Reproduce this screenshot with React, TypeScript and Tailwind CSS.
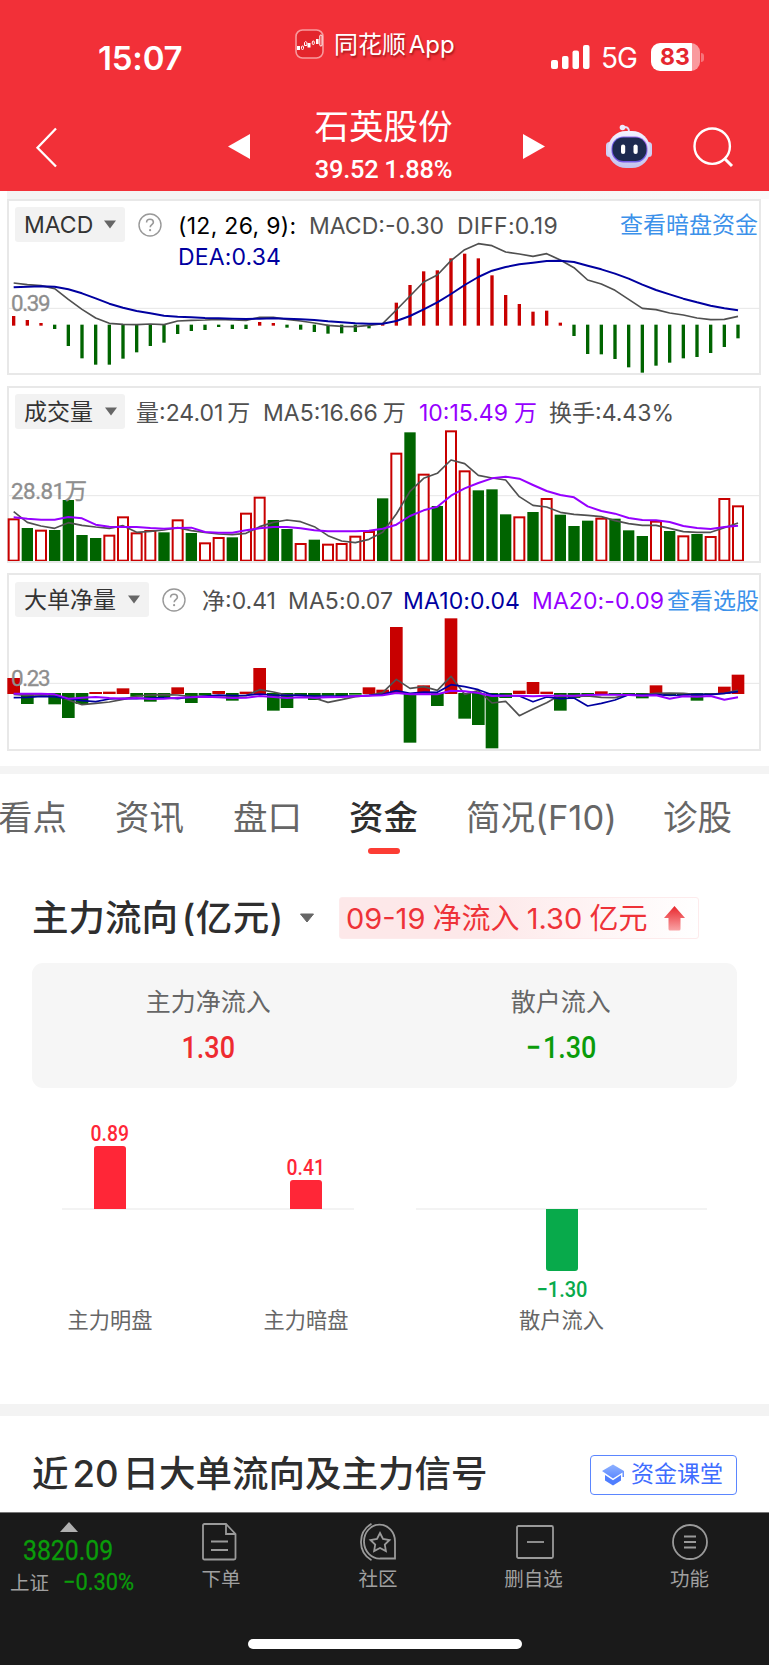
import type { ReactNode } from "react";

const cjk = "font-['Inter','Noto_Sans_CJK_SC',sans-serif]";
const din = "font-['Roboto','Noto_Sans_CJK_SC',sans-serif]";

const STEP = 41;
const FIRST = 41;

const macd: number[] = [
  378, 390, 399, 417, 468, 505, 524, 524, 506, 487, 468, 458, 432, 423, 420, 411, 417, 417, 396, 399, 413, 419, 426,
  431, 430, 426, 415, 401, 338, 285, 244, 241, 205, 191, 205, 256, 315, 342, 365, 362, 398, 438, 492, 493, 507, 532,
  548, 527, 518, 505, 501, 489, 471, 445,
];
const diff: number[] = [
  279, 284, 287, 296, 328, 358, 384, 400, 403, 404, 402, 404, 393, 391, 390, 388, 390, 391, 382, 382, 388, 393, 399,
  406, 409, 410, 406, 401, 360, 318, 276, 255, 212, 179, 161, 167, 186, 192, 199, 191, 210, 233, 270, 282, 301, 328,
  355, 359, 369, 375, 384, 389, 388, 379,
];
const dea: number[] = [
  292, 290, 289, 290, 298, 310, 325, 341, 353, 363, 370, 377, 380, 382, 384, 385, 386, 387, 386, 385, 386, 388, 390,
  394, 397, 400, 401, 401, 393, 378, 358, 337, 312, 285, 261, 242, 231, 223, 218, 213, 212, 216, 227, 238, 251, 266,
  284, 300, 313, 326, 337, 347, 355, 361,
];

const volume: number[] = [
  417, 444, 451, 450, 360, 465, 474, 466, 411, 459, 452, 457, 420, 459, 489, 473, 472, 400, 352, 420, 447, 491, 479,
  493, 491, 469, 455, 355, 220, 157, 283, 378, 153, 273, 331, 328, 403, 411, 396, 356, 404, 438, 422, 415, 416, 451,
  468, 424, 453, 468, 462, 470, 356, 378,
];
const volumeKind = "RGRGGGGRRRRGRGRRGRRGGRGRRRRGRGRGRRGGGRGRGGGRGGGRGRGRRR";
const vma5: number[] = [
  395, 427, 438, 445, 428, 436, 441, 445, 437, 457, 454, 450, 443, 452, 457, 462, 464, 460, 440, 427, 420, 425, 440,
  467, 483, 488, 478, 457, 402, 334, 295, 280, 240, 251, 286, 294, 300, 350, 376, 381, 397, 403, 406, 410, 422, 431,
  436, 436, 445, 455, 457, 457, 443, 429,
];
const vma10: number[] = [
  412, 416, 419, 419, 411, 415, 434, 440, 441, 441, 444, 446, 444, 443, 456, 458, 458, 451, 445, 441, 441, 445, 451,
  454, 454, 454, 452, 446, 434, 408, 391, 380, 347, 325, 309, 295, 290, 296, 315, 333, 345, 352, 379, 393, 401, 414,
  420, 421, 426, 438, 444, 447, 441, 437,
];

const net: number[] = [
  324, 402, 376, 403, 444, 402, 366, 365, 355, 380, 395, 386, 352, 399, 376, 363, 392, 365, 294, 422, 414, 378, 390,
  377, 378, 374, 352, 359, 171, 518, 346, 408, 145, 446, 465, 535, 384, 362, 336, 365, 422, 384, 376, 364, 375, 375,
  385, 346, 376, 376, 392, 375, 350, 314,
];
const nma5: number[] = [
  373, 376, 374, 375, 390, 404, 400, 396, 388, 378, 375, 374, 375, 380, 379, 378, 378, 377, 359, 366, 375, 376, 384,
  397, 389, 380, 376, 368, 328, 355, 350, 361, 319, 373, 362, 399, 394, 437, 417, 398, 375, 380, 378, 382, 383, 374,
  374, 370, 369, 370, 374, 372, 370, 361,
];
const nma10: number[] = [
  383, 382, 379, 380, 386, 392, 395, 387, 385, 386, 384, 383, 386, 381, 378, 375, 377, 376, 372, 375, 376, 376, 378,
  378, 378, 378, 376, 373, 362, 370, 366, 367, 344, 350, 359, 374, 377, 378, 395, 381, 386, 384, 408, 400, 390, 374,
  375, 374, 376, 375, 373, 374, 370, 365,
];
const nma20: number[] = [
  371, 371, 371, 373, 386, 383, 381, 384, 386, 384, 387, 386, 383, 382, 380, 382, 384, 383, 378, 381, 384, 382, 383,
  382, 381, 379, 377, 376, 369, 373, 372, 373, 362, 364, 369, 378, 377, 377, 379, 377, 377, 377, 375, 374, 374, 375,
  377, 376, 386, 379, 380, 378, 389, 382,
];

const xAt = (i: number) => FIRST + STEP * i;

function Line({ data, color, w = 5 }: { data: number[]; color: string; w?: number }) {
  return (
    <polyline
      points={data.map((v, i) => `${xAt(i)},${v}`).join(" ")}
      fill="none"
      stroke={color}
      strokeWidth={w}
      strokeLinejoin="round"
    />
  );
}

/* Chart space is three units per pixel; `top` is the first row shown. */
function Plot({ top, height, gridY, label, labelW, labelY, children }: {
  top: number; height: number; gridY: number; label: string; labelW: number; labelY: number; children: ReactNode;
}) {
  return (
    <svg className="col-start-1 row-start-1 -ml-[9px] h-full w-[769px]" viewBox={`0 ${top} 2307 ${height}`} preserveAspectRatio="none">
      <line x1={27} x2={2280} y1={gridY} y2={gridY} stroke="#e6e6e6" strokeWidth={3} />
      {children}
      <text x={33} y={labelY} fontSize={67} fill="#8e8e8e" stroke="#8e8e8e" strokeWidth={1} textLength={labelW} className={din}>{label}</text>
    </svg>
  );
}

function Panel({ plot, children, size }: { plot: ReactNode; children: ReactNode; size: string }) {
  return (
    <section className={`ml-[7px] grid w-[754px] border-2 border-[#e8e8e8] bg-white ${size}`}>
      {plot}
      <div className="col-start-1 row-start-1">{children}</div>
    </section>
  );
}

function Picker({ label, size, text }: { label: string; size: string; text: string }) {
  return (
    <button className={`flex h-[35px] shrink-0 items-center rounded-[3px] bg-[#f2f2f2] pl-[9px] text-[#333] ${size}`}>
      <span className={`shrink-0 pt-[2px] text-left whitespace-nowrap ${text}`}>{label}</span>
      <svg width="12" height="9" viewBox="0 0 12 9"><path d="M0 .5h12L6 8.5z" fill="#666" /></svg>
    </button>
  );
}

function Help() {
  return (
    <svg className="shrink-0" width="24" height="24" viewBox="0 0 24 24" fill="none" stroke="#999" strokeWidth="1.4">
      <circle cx="12" cy="12" r="11" />
      <path d="M8.6 9.4c0-2 1.5-3.2 3.4-3.2s3.4 1.2 3.4 3c0 2.4-3.2 2.6-3.2 5.1" strokeWidth="1.6" />
      <circle cx="12.1" cy="17.2" r="1.1" fill="#999" stroke="none" />
    </svg>
  );
}

function Header() {
  return (
    <header className="h-[191px] bg-[#f23038] text-white">
      <div className="flex h-[96px] items-start">
        <div className="ml-[98px] mt-[37px] w-[197px] text-[33px] leading-[42px] font-semibold tracking-[-0.2px]">15:07</div>
        <svg className="mt-[29px] shrink-0" width="29" height="30" viewBox="0 0 29 30">
          <rect x="1" y="1" width="27" height="28" rx="6.5" fill="#e3252c" stroke="#f89a9d" strokeWidth="1.6" />
          <g fill="#fff">
            <rect x="2" y="17" width="3" height="4" />
            <rect x="12.5" y="14" width="3" height="4.5" />
            <rect x="21" y="10" width="2.6" height="5" />
          </g>
          <g fill="none" stroke="#fff" strokeWidth="1">
            <rect x="6.5" y="17" width="2" height="3.5" rx="1" />
            <path d="M9.5 16.5v-3l1.2-1 1.2 1v3z" />
            <rect x="17.3" y="12" width="2" height="3.5" rx="1" />
            <rect x="24.8" y="6" width="2.2" height="11" rx="1" />
          </g>
        </svg>
        <div className="ml-[10px] mt-[27px] w-[217px] shrink-0 text-[24px] leading-[36px] whitespace-nowrap [word-spacing:-4px] [text-shadow:1px_2px_2px_rgba(90,0,0,0.5)]">同花顺 App</div>
        <svg className="mt-[45px] shrink-0" width="40" height="24" viewBox="0 0 40 24" fill="#fff">
          <rect x="0" y="15" width="7" height="9" rx="2" />
          <rect x="11" y="11" width="6.5" height="13" rx="2" />
          <rect x="21.5" y="5.500" width="6.500" height="18.500" rx="2" />
          <rect x="32" y="0" width="6.500" height="24" rx="2" />
        </svg>
        <div className="ml-[10px] mt-[40px] w-[50px] shrink-0 text-[28px] leading-[36px] tracking-[-1px]">5G</div>
        <div className="mt-[43px] flex shrink-0 items-center">
          <div className="h-[28px] w-[49px] rounded-[9px] bg-[linear-gradient(90deg,#fff_83%,#f99a9e_83%)] pr-[1px] text-center text-[23px] leading-[29px] font-bold text-[#e5262f]">83</div>
          <div className="ml-[1px] h-[9px] w-[3px] rounded-r-full bg-[#f6747a]" />
        </div>
      </div>
      <div className="flex h-[95px] items-start">
        <svg className="ml-[35px] mt-[31px] shrink-0" width="24" height="42" viewBox="0 0 24 42" fill="none" stroke="#fff" strokeWidth="2.300"><path d="M21 1.500 2.500 20.700 21 39.500" /></svg>
        <svg className="ml-[169px] mt-[38px] shrink-0" width="22" height="25" viewBox="0 0 22 25"><path d="M22 0v25L0 12.500z" fill="#fff" /></svg>
        <div className="ml-[61px] mt-[5px] w-[145px] text-center whitespace-nowrap">
          <div className="text-[34.5px] leading-[52px]">石英股份</div>
          <div className={`origin-center scale-x-[0.96] text-[26.500px] leading-[31px] font-medium tracking-[-0.3px] ${din}`}>39.52 1.88%</div>
        </div>
        <svg className="ml-[67px] mt-[38px] shrink-0" width="22" height="25" viewBox="0 0 22 25"><path d="M0 0v25l22-12.500z" fill="#fff" /></svg>
        <svg className="ml-[60px] mt-[28px] shrink-0" width="48" height="45" viewBox="0 0 48 45">
          <defs>
            <linearGradient id="shell" x1="0" y1="0" x2="0" y2="1"><stop offset="0" stopColor="#f4f2ff" /><stop offset="1" stopColor="#c3c2ee" /></linearGradient>
            <linearGradient id="visor" x1="0" y1="1" x2="1" y2="0"><stop offset="0" stopColor="#7a4fe0" /><stop offset=".5" stopColor="#6d63ea" /><stop offset="1" stopColor="#b46cf0" /></linearGradient>
          </defs>
          <path d="M18 3c4-.5 6 1 6 5" fill="none" stroke="#e3e0fb" strokeWidth="2" />
          <circle cx="17.500" cy="3.500" r="2.800" fill="#eeeafd" />
          <rect x="1" y="18" width="7" height="15" rx="3.500" fill="#cfd0f4" />
          <rect x="40" y="18" width="7" height="15" rx="3.500" fill="#cfd0f4" />
          <rect x="3" y="7" width="42" height="37" rx="18" fill="url(#shell)" />
          <rect x="6.500" y="12.500" width="36" height="26" rx="12" fill="url(#visor)" />
          <rect x="7.500" y="13.500" width="34" height="23.500" rx="11" fill="#1d2a4f" />
          <rect x="16" y="20.500" width="4.200" height="9.500" rx="2.100" fill="#fff" />
          <rect x="28.500" y="20.500" width="4.200" height="9.500" rx="2.100" fill="#fff" />
        </svg>
        <svg className="ml-[40px] mt-[31px] shrink-0" width="41" height="41" viewBox="0 0 41 41" fill="none" stroke="#fff" strokeWidth="2.400"><circle cx="19.200" cy="19.200" r="17.700" /><path d="M31.500 31.500 39 39" strokeWidth="3" /></svg>
      </div>
    </header>
  );
}

function Charts() {
  return (
    <div className="flex h-[575px] flex-col text-[23px] text-[#505050]">
      <div className="ml-[7px] h-[8px] shrink-0 bg-gradient-to-r from-[#f4f4f4] from-60% to-[#fafafa]" />
      <Panel
        size="h-[176px]"
        plot={
          <Plot top={33} height={516} gridY={355} label="0.39" labelW={119} labelY={363}>
            {macd.map((v, i) => (
              <rect key={i} x={xAt(i) - 5} y={Math.min(v, 404)} width={10} height={v < 404 ? 407 - v : v - 404} fill={v < 404 ? "#c80000" : "#006400"} />
            ))}
            <Line data={diff} color="#505050" />
            <Line data={dea} color="#0000a0" w={6} />
          </Plot>
        }
      >
        <div className="mt-[6px] ml-[6px] flex h-[35px] items-center whitespace-nowrap [&>a]:pt-[2px] [&>span]:pt-[3px]">
          <Picker label="MACD" size="w-[110px]" text="w-[80px]" />
          <div className="ml-[13px] w-[40px]"><Help /></div>
          <span className="w-[131px] tracking-[0.3px] text-black">(12, 26, 9):</span>
          <span className="w-[148px]">MACD:-0.30</span>
          <span className="w-[163px] tracking-[0.25px]">DIFF:0.19</span>
          <a className="text-[#3c91ea]">查看暗盘资金</a>
        </div>
        <div className="ml-[169px] leading-[30px] tracking-[0.15px] text-[#0000a0]">DEA:0.34</div>
      </Panel>
      <Panel
        size="mt-[11px] h-[177px]"
        plot={
          <Plot top={24} height={519} gridY={347} label="28.81万" labelW={228} labelY={357}>
            {volume.map((v, i) =>
              volumeKind[i] === "G" ? (
                <rect key={i} x={xAt(i) - 17} y={v} width={34} height={545 - v} fill="#006400" />
              ) : (
                <rect key={i} x={xAt(i) - 15} y={v + 1} width={30} height={541 - v} fill="#fff" stroke="#c80000" strokeWidth={6} />
              ),
            )}
            <Line data={vma5} color="#505050" />
            <Line data={vma10} color="#9600ff" w={6} />
          </Plot>
        }
      >
        <div className="mt-[6px] ml-[6px] flex h-[35px] items-center whitespace-nowrap [&>span]:pt-[3px]">
          <Picker label="成交量" size="w-[110px]" text="w-[81px]" />
          <span className="ml-[11px] w-[127px]">量:24.01<span className="ml-[4px]">万</span></span>
          <span className="w-[156px]">MA5:16.66<span className="ml-[5px]">万</span></span>
          <span className="w-[130px] text-[#9600ff]">10:15.49<span className="ml-[6px]">万</span></span>
          <span>换手:4.43%</span>
        </div>
      </Panel>
      <Panel
        size="mt-[10px] h-[178px]"
        plot={
          <Plot top={15} height={522} gridY={340} label="0.23" labelW={119} labelY={348}>
            {net.map((v, i) => (
              <rect key={i} x={xAt(i) - 19} y={v < 370 ? v : 369} width={38} height={v < 370 ? 372 - v : v - 369} fill={v < 370 ? "#c80000" : "#006400"} />
            ))}
            <Line data={nma5} color="#505050" />
            <Line data={nma10} color="#0000a0" />
            <Line data={nma20} color="#9600ff" w={6} />
          </Plot>
        }
      >
        <div className="mt-[7px] ml-[6px] flex h-[35px] items-center whitespace-nowrap [&>a]:pt-[3px] [&>span]:pt-[3px]">
          <Picker label="大单净量" size="w-[134px]" text="w-[104px]" />
          <div className="ml-[13px] w-[40px]"><Help /></div>
          <span className="w-[86px]">净:0.41</span>
          <span className="w-[115px] tracking-[0.1px]">MA5:0.07</span>
          <span className="w-[129px] tracking-[0.15px] text-[#0000a0]">MA10:0.04</span>
          <span className="w-[135px] tracking-[0.1px] text-[#9600ff]">MA20:-0.09</span>
          <a className="text-[#3c91ea]">查看选股</a>
        </div>
      </Panel>
    </div>
  );
}

function Tabs() {
  return (
    <nav className="flex h-[88px] items-start overflow-hidden pt-[18px] text-[34.5px] leading-[52px] whitespace-nowrap text-[#666]">
      <span className="-ml-[2px] w-[117px] shrink-0">看点</span>
      <span className="w-[118px] shrink-0">资讯</span>
      <span className="w-[116px] shrink-0">盘口</span>
      <div className="flex w-[117px] shrink-0 flex-col font-medium text-[#2e2e2e]">
        <span>资金</span>
        <span className="mt-[4px] ml-[19px] h-[6px] w-[32px] rounded-[3px] bg-[#fc3d34]" />
      </div>
      <span className="w-[197px] shrink-0 tracking-[0.1px]">简况(F10)</span>
      <span>诊股</span>
    </nav>
  );
}

function FlowItem({ value, label, up, bar }: { value: string; label: string; up?: boolean; bar: string }) {
  return (
    <div className="flex w-[100px] flex-col items-center">
      <div className="flex h-[90px] flex-col items-center justify-end">
        {up && <span className={`mb-[-1px] scale-x-[0.88] text-[22px] leading-[27px] font-medium text-[#ff2637] ${din}`}>{value}</span>}
        {up && <span className={`w-[32px] rounded-t-[3px] bg-[#ff2637] ${bar}`} />}
      </div>
      <div className="flex h-[96px] flex-col items-center">
        {!up && <span className={`w-[32px] rounded-b-[3px] bg-[#08aa4b] ${bar}`} />}
        {!up && <span className={`mt-[5px] scale-x-[0.91] text-[22px] leading-[27px] font-medium text-[#08aa4b] ${din}`}>{value}</span>}
      </div>
      <span className="text-[21.200px] leading-[30px] text-[#666]">{label}</span>
    </div>
  );
}

function MoneyFlow() {
  return (
    <section className="h-[542px] pt-[35px]">
      <div className="flex h-[42px] items-center whitespace-nowrap">
        <h2 className="ml-[32px] w-[267px] text-[36.500px] font-medium text-[#2e2e2e] [word-spacing:-6px]">主力流向 <span className="tracking-[0.5px]">(亿元)</span></h2>
        <svg width="16" height="10" viewBox="0 0 16 10"><path d="M1.500 1h13L8 9z" fill="#666" stroke="#666" strokeLinejoin="round" /></svg>
        <div className="ml-[24px] flex h-[42px] w-[360px] items-center rounded-[3px] border border-[#fdebec] bg-gradient-to-r from-[#fde8e9] from-40% to-white pl-[6px] text-[29px] text-[#ee3238]">
          <span className="w-[318px] pt-[1px] [word-spacing:-1px]">09-19 净流入 1.30 亿元</span>
          <svg width="21" height="25" viewBox="0 0 21 25">
            <defs><linearGradient id="rise" x1="0" y1="0" x2="0" y2="1"><stop offset="0" stopColor="#e8262c" /><stop offset="1" stopColor="#f9a3a5" /></linearGradient></defs>
            <path d="M10.500 0 21 12h-4.500v11q0 1.500-1.500 1.500H6q-1.500 0-1.500-1.500V12H0z" fill="url(#rise)" />
          </svg>
        </div>
      </div>
      <div className="mt-[24px] ml-[32px] grid h-[125px] w-[705px] grid-cols-2 rounded-[11px] bg-[#f6f6f6] pt-[20px] text-center">
        <div>
          <div className="text-[25px] leading-[38px] text-[#666]">主力净流入</div>
          <div className={`mt-[7px] scale-x-[0.87] text-[31px] leading-[40px] font-medium text-[#ee2b30] ${din}`}>1.30</div>
        </div>
        <div>
          <div className="text-[25px] leading-[38px] text-[#666]">散户流入</div>
          <div className={`mt-[7px] scale-x-[0.87] text-[31px] leading-[40px] font-medium text-[#0a9c0a] ${din}`}><span className="mr-[2px]">−</span>1.30</div>
        </div>
      </div>
      <div className="mt-[31px] ml-[62px] grid grid-cols-[292px_291px] gap-[62px]">
        <div className="grid">
          <div className="col-start-1 row-start-1 mt-[89px] h-[2px] bg-[#f3f3f3]" />
          <div className="col-start-1 row-start-1 -mr-[2px] -ml-[2px] flex justify-between">
            <FlowItem value="0.89" label="主力明盘" up bar="h-[63px]" />
            <FlowItem value="0.41" label="主力暗盘" up bar="h-[29px]" />
          </div>
        </div>
        <div className="grid">
          <div className="col-start-1 row-start-1 mt-[89px] h-[2px] bg-[#f3f3f3]" />
          <div className="col-start-1 row-start-1 flex justify-center">
            <FlowItem value="−1.30" label="散户流入" bar="h-[62px]" />
          </div>
        </div>
      </div>
    </section>
  );
}

function Signals() {
  return (
    <section className="flex h-[96px] items-center justify-between pt-[21px] pr-[32px] pl-[32px]">
      <h2 className="text-[36.500px] font-medium whitespace-nowrap text-[#2e2e2e]">近<span className="mr-[4px] ml-[4px]">20</span>日大单流向及主力信号</h2>
      <button className="flex h-[40px] w-[147px] items-center rounded-[4px] border-[1.500px] border-[#5b86ff] pl-[11px] text-[23px] whitespace-nowrap text-[#3f6dff]">
        <svg className="mr-[7px] shrink-0" width="22" height="22" viewBox="0 0 22 22">
          <defs><linearGradient id="cap" x1="0" y1="0" x2="0" y2="1"><stop offset="0" stopColor="#8fb2ff" /><stop offset="1" stopColor="#5c88ff" /></linearGradient></defs>
          <path d="M11 .5 22 7v6h-1.500V8.500L11 14.500 0 7z" fill="url(#cap)" />
          <path d="M3 11 11 16.300l8-5.300v5.500L11 21.500l-8-5z" fill="#4f7eff" />
        </svg>
        资金课堂
      </button>
    </section>
  );
}

function NavItem({ label, children, size }: { label: string; children: ReactNode; size: string }) {
  return (
    <div className={`flex shrink-0 flex-col items-center ${size}`}>
      <svg width="42" height="40" viewBox="0 0 42 40" fill="none" stroke="#9a9a9a" strokeWidth="1.800">{children}</svg>
      <span className="mt-[2px] text-[19.500px] leading-[30px] text-[#a0a0a0]">{label}</span>
    </div>
  );
}

function BottomBar() {
  return (
    <footer className="h-[153px] border-t border-[#777] bg-[#1a1a1a]">
      <div className="flex h-[126px] pt-[9px]">
        <div className="flex w-[140px] shrink-0 flex-col items-center">
          <svg className="-ml-[3px]" width="18" height="10" viewBox="0 0 18 10"><path d="M9 0l9 10H0z" fill="#b0b0b0" /></svg>
          <span className={`mt-[3px] -ml-[3px] scale-x-[0.92] text-[27px] leading-[32px] text-[#0a9c0a] [-webkit-text-stroke:0.3px_#0a9c0a] ${din}`}>3820.09</span>
          <div className="flex w-full items-center pl-[10px] whitespace-nowrap">
            <span className="w-[53px] pt-[1px] text-[19.500px] leading-[30px] text-[#a0a0a0]">上证</span>
            <span className={`origin-left scale-x-[0.95] text-[23px] leading-[30px] text-[#0a9c0a] [-webkit-text-stroke:0.3px_#0a9c0a] ${din}`}>−0.30%</span>
          </div>
        </div>
        <NavItem label="下单" size="w-[162px]">
          <path d="M3 3.500q0-1.500 1.500-1.500h21.500l9.500 10v24q0 1.500-1.500 1.500H4.500Q3 37.500 3 36zM26 2v10h9.500M11 19.500h17M11 28h17" />
        </NavItem>
        <NavItem label="社区" size="w-[152px]">
          <path d="M38 36.500H23.500A15.500 17 0 1 1 38 20zM14.500 1.800a21 21 0 0 0 0 36.400" />
          <path d="m23 11 3 6 6.500 1-4.700 4.600 1.100 6.500-5.900-3.100-5.900 3.100 1.100-6.500-4.700-4.600 6.500-1z" />
        </NavItem>
        <NavItem label="删自选" size="w-[159px]">
          <rect x="4" y="4" width="36" height="32" rx="1.500" />
          <path d="M14 20h17" />
        </NavItem>
        <NavItem label="功能" size="w-[153px]">
          <circle cx="21" cy="20" r="17" />
          <path d="M15 14.500h12M15 20h12M15 25.500h12" />
        </NavItem>
      </div>
      <div className="ml-[248px] h-[10px] w-[274px] rounded-full bg-white" />
    </footer>
  );
}

export default function App() {
  return (
    <main className={`h-[1665px] w-[769px] overflow-hidden bg-white ${cjk}`}>
      <Header />
      <Charts />
      <div className="h-[8px] bg-[#f4f4f4]" />
      <Tabs />
      <MoneyFlow />
      <div className="h-[12px] bg-[#f3f3f3]" />
      <Signals />
      <BottomBar />
    </main>
  );
}
